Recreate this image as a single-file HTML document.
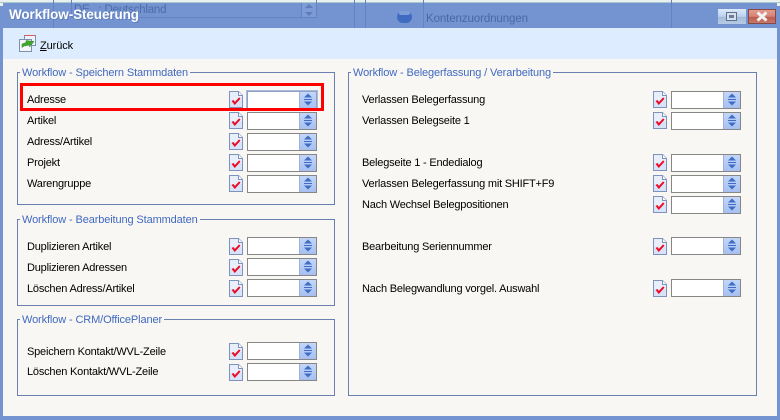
<!DOCTYPE html>
<html><head><meta charset="utf-8"><title>Workflow-Steuerung</title>
<style>
html,body{margin:0;padding:0;width:780px;height:420px;overflow:hidden;background:#fff;font-family:"Liberation Sans",sans-serif;font-size:11px;color:#000}
div,span,svg{position:absolute;box-sizing:border-box}
u{text-decoration:underline}
.t{white-space:nowrap;line-height:14px;height:14px;letter-spacing:-.2px;margin-top:1px}
.lg{white-space:nowrap;line-height:14px;color:#3f69c0;background:#f9f7f3;padding:0 2px;height:14px;top:-8px;left:2px;font-size:11px;letter-spacing:-.12px;margin-top:1px}
.g{border:1px solid #6a80b0;background:transparent}
.i{width:70px;height:18px;background:#fff;border:1px solid #868686}
.i i{position:absolute;right:0;top:0;width:16px;height:16px;background:linear-gradient(#c4d6f8,#a6c0f2);border-left:1px solid #9fb2d8;display:block}
.i svg{left:2px;top:0}
.c{width:14px;height:17px}
</style></head><body>
<svg width="0" height="0" style="left:0;top:0">
<symbol id="ck" viewBox="0 0 14 17"><path d="M.5 .5H9.5L13.5 4.5V16.5H.5Z" fill="#d6e3f8" stroke="#7d93bd"/><path d="M1 1H9V5H13V9H1Z" fill="#e8effb"/><path d="M9.5 .5V4.5H13.5" fill="#fff" stroke="#7d93bd"/><path d="M3.5 9.500L5.800 12.500L10.800 7" fill="none" stroke="#ee0a22" stroke-width="2"/></symbol>
<symbol id="sp" viewBox="0 0 12 15"><path d="M6 1.500L10 5.500H2Z" fill="#3f6cc4"/><path d="M6 13.500L10 9.500H2Z" fill="#3f6cc4"/><path d="M2 7.500H10" stroke="#3f6cc4"/></symbol>
</svg>

<!-- background ghost -->
<div style="left:0;top:0;width:780px;height:3px;background:#e9f1ee"></div>
<div style="left:0;top:2px;width:780px;height:1px;background:#a8c8cc"></div>

<!-- window frame -->
<div style="left:0;top:3px;width:780px;height:417px;background:#7394d0"></div>
<div style="left:0;top:3px;width:3px;height:3px;background:#e9f1ee"></div>
<div style="left:777px;top:3px;width:3px;height:3px;background:#e9f1ee"></div>

<!-- title bar ghost content -->
<div style="left:53px;top:0;width:1px;height:28px;background:#6583c2"></div>
<div style="left:71px;top:0;width:1px;height:17px;background:#6583c2"></div>
<div style="left:71px;top:17px;width:245px;height:1px;background:#6583c2"></div>
<div style="left:316px;top:0;width:1px;height:18px;background:#6583c2"></div>
<div class="t" style="left:74px;top:2px;color:#4e6ba8;font-size:11.5px">DE &nbsp; : Deutschland</div>
<div style="left:301px;top:3px;width:15px;height:14px;background:#7d9cd6;border-left:1px solid #6583c2"></div>
<svg width="10" height="12" style="left:304px;top:4px"><path d="M5 0L9 4H1ZM5 12L9 8H1Z" fill="#5d7cbc"/></svg>
<div style="left:354px;top:0;width:1px;height:28px;background:#6583c2"></div>
<div style="left:365px;top:0;width:1px;height:28px;background:#6583c2"></div>
<div style="left:423px;top:0;width:1px;height:28px;background:#6583c2"></div>
<div style="left:397px;top:11px;width:15px;height:12px;background:#3f6cc0;border-radius:6px"></div>
<div style="left:399px;top:11px;width:11px;height:4px;background:#7f9dd8;border-radius:4px"></div>
<div class="t" style="left:426px;top:11px;color:#4a67a6;font-size:11.5px;letter-spacing:-.1px">Kontenzuordnungen</div>
<div style="left:671px;top:0;width:1px;height:28px;background:#6583c2"></div>

<!-- title -->
<div class="t" style="left:9px;top:6px;height:16px;line-height:16px;color:#fff;font-weight:bold;font-size:13.5px;letter-spacing:-.1px;text-shadow:1px 1px 0 #5f7fbd">Workflow-Steuerung</div>

<!-- window buttons -->
<div style="left:718px;top:9px;width:28px;height:15px;background:linear-gradient(#dce9fb 0,#bcd0ee 50%,#a6bcd6 55%,#b5cbe6 100%)"></div>
<div style="left:726px;top:12px;width:11px;height:9px;border:1px solid #5f6f8c;background:#d5e0f0"></div>
<div style="left:729px;top:15px;width:5px;height:3px;background:#6d7d98"></div>
<div style="left:748px;top:9px;width:28px;height:15px;border:1px solid #834a46;background:linear-gradient(#e49c90 0,#d58273 50%,#bc5c50 55%,#c87768 100%)"></div>
<svg width="14" height="11" style="left:755px;top:11px"><path d="M2.500 1.500L11.500 9.500M11.500 1.500L2.500 9.500" stroke="#f2f2f2" stroke-width="3"/></svg>

<!-- toolbar -->
<div style="left:3px;top:28px;width:774px;height:31px;background:#deecff"></div>
<svg width="18" height="18" style="left:19px;top:35px"><rect x="5.500" y="0.500" width="11" height="10" fill="#eef3fb" stroke="#7f8fb0"/><path d="M5.500 .5H16.500" stroke="#d06060"/><rect x="0.500" y="4.500" width="12" height="12" fill="#f3f6fb" stroke="#7f8fb0"/><path d="M3 12.500V9L7 7.500V5.500L15 6.500L10.500 12V10L5 11Z" fill="#3fa52f" stroke="#2f8a25" stroke-width=".5"/></svg>
<div class="t" style="left:40px;top:38px;font-size:11px;letter-spacing:-.1px"><u>Z</u>urück</div>

<!-- body -->
<div style="left:3px;top:59px;width:774px;height:357px;background:#f9f7f3"></div>

<!-- group 1 -->
<div class="g" style="left:17px;top:72px;width:318px;height:133px"><span class="lg">Workflow - Speichern Stammdaten</span></div>
<div class="t" style="left:27px;top:92px">Adresse</div>
<div class="t" style="left:27px;top:113px">Artikel</div>
<div class="t" style="left:27px;top:134px">Adress/Artikel</div>
<div class="t" style="left:27px;top:155px">Projekt</div>
<div class="t" style="left:27px;top:176px">Warengruppe</div>

<!-- group 2 -->
<div class="g" style="left:17px;top:219px;width:318px;height:87px"><span class="lg">Workflow - Bearbeitung Stammdaten</span></div>
<div class="t" style="left:27px;top:239px">Duplizieren Artikel</div>
<div class="t" style="left:27px;top:260px">Duplizieren Adressen</div>
<div class="t" style="left:27px;top:281px">Löschen Adress/Artikel</div>

<!-- group 3 -->
<div class="g" style="left:17px;top:319px;width:318px;height:77px"><span class="lg">Workflow - CRM/OfficePlaner</span></div>
<div class="t" style="left:27px;top:344px">Speichern Kontakt/WVL-Zeile</div>
<div class="t" style="left:27px;top:364px">Löschen Kontakt/WVL-Zeile</div>

<!-- right group -->
<div class="g" style="left:348px;top:72px;width:409px;height:324px"><span class="lg">Workflow - Belegerfassung / Verarbeitung</span></div>
<div class="t" style="left:362px;top:92px">Verlassen Belegerfassung</div>
<div class="t" style="left:362px;top:113px">Verlassen Belegseite 1</div>
<div class="t" style="left:362px;top:155px">Belegseite 1 - Endedialog</div>
<div class="t" style="left:362px;top:176px">Verlassen Belegerfassung mit SHIFT+F9</div>
<div class="t" style="left:362px;top:197px">Nach Wechsel Belegpositionen</div>
<div class="t" style="left:362px;top:239px">Bearbeitung Seriennummer</div>
<div class="t" style="left:362px;top:281px">Nach Belegwandlung vorgel. Auswahl</div>

<!-- left check icons -->
<svg class="c" style="left:229px;top:91px"><use href="#ck"/></svg>
<svg class="c" style="left:229px;top:112px"><use href="#ck"/></svg>
<svg class="c" style="left:229px;top:133px"><use href="#ck"/></svg>
<svg class="c" style="left:229px;top:154px"><use href="#ck"/></svg>
<svg class="c" style="left:229px;top:175px"><use href="#ck"/></svg>
<svg class="c" style="left:229px;top:238px"><use href="#ck"/></svg>
<svg class="c" style="left:229px;top:259px"><use href="#ck"/></svg>
<svg class="c" style="left:229px;top:280px"><use href="#ck"/></svg>
<svg class="c" style="left:229px;top:343px"><use href="#ck"/></svg>
<svg class="c" style="left:229px;top:364px"><use href="#ck"/></svg>

<!-- right check icons -->
<svg class="c" style="left:653px;top:91px"><use href="#ck"/></svg>
<svg class="c" style="left:653px;top:112px"><use href="#ck"/></svg>
<svg class="c" style="left:653px;top:154px"><use href="#ck"/></svg>
<svg class="c" style="left:653px;top:175px"><use href="#ck"/></svg>
<svg class="c" style="left:653px;top:196px"><use href="#ck"/></svg>
<svg class="c" style="left:653px;top:238px"><use href="#ck"/></svg>
<svg class="c" style="left:653px;top:280px"><use href="#ck"/></svg>

<!-- left inputs -->
<div class="i" style="left:247px;top:91px;border-color:#8fa2c6;box-shadow:0 0 0 1px #a9bbdc"><i><svg width="12" height="15"><use href="#sp"/></svg></i></div>
<div class="i" style="left:247px;top:112px"><i><svg width="12" height="15"><use href="#sp"/></svg></i></div>
<div class="i" style="left:247px;top:133px"><i><svg width="12" height="15"><use href="#sp"/></svg></i></div>
<div class="i" style="left:247px;top:154px"><i><svg width="12" height="15"><use href="#sp"/></svg></i></div>
<div class="i" style="left:247px;top:175px"><i><svg width="12" height="15"><use href="#sp"/></svg></i></div>
<div class="i" style="left:247px;top:237px"><i><svg width="12" height="15"><use href="#sp"/></svg></i></div>
<div class="i" style="left:247px;top:258px"><i><svg width="12" height="15"><use href="#sp"/></svg></i></div>
<div class="i" style="left:247px;top:279px"><i><svg width="12" height="15"><use href="#sp"/></svg></i></div>
<div class="i" style="left:247px;top:342px"><i><svg width="12" height="15"><use href="#sp"/></svg></i></div>
<div class="i" style="left:247px;top:363px"><i><svg width="12" height="15"><use href="#sp"/></svg></i></div>

<!-- right inputs -->
<div class="i" style="left:671px;top:91px"><i><svg width="12" height="15"><use href="#sp"/></svg></i></div>
<div class="i" style="left:671px;top:112px"><i><svg width="12" height="15"><use href="#sp"/></svg></i></div>
<div class="i" style="left:671px;top:154px"><i><svg width="12" height="15"><use href="#sp"/></svg></i></div>
<div class="i" style="left:671px;top:175px"><i><svg width="12" height="15"><use href="#sp"/></svg></i></div>
<div class="i" style="left:671px;top:196px"><i><svg width="12" height="15"><use href="#sp"/></svg></i></div>
<div class="i" style="left:671px;top:237px"><i><svg width="12" height="15"><use href="#sp"/></svg></i></div>
<div class="i" style="left:671px;top:279px"><i><svg width="12" height="15"><use href="#sp"/></svg></i></div>

<!-- red highlight -->
<div style="left:20px;top:83px;width:304px;height:28px;border:3px solid #f00"></div>
</body></html>
